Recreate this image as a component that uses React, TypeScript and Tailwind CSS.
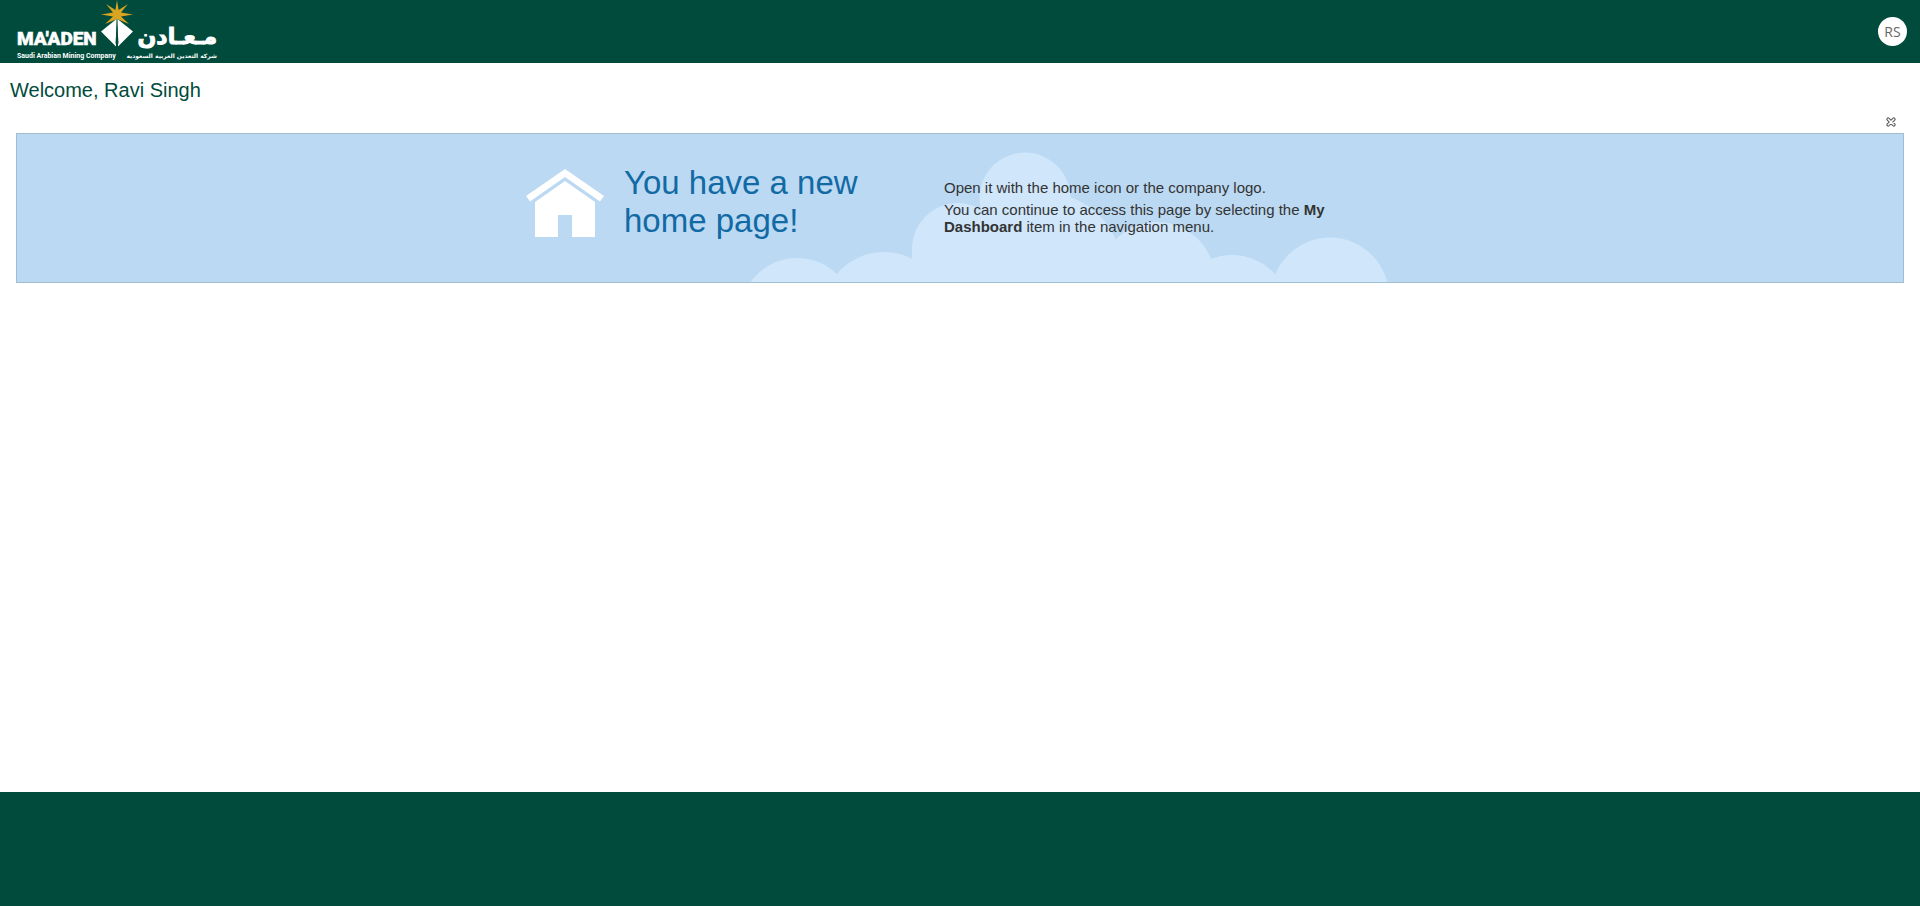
function CompanyLogo() {
  return (
    <svg
      role="img"
      aria-label="Ma'aden, Saudi Arabian Mining Company"
      viewBox="0 0 220 63"
      className="h-[63px] w-[220px]"
      fill="#ffffff"
    >
      <path
        fill="#d9a520"
        d="M117 0L118.600 10 128 4 121 12.500 133 14.500 121 16.500 129 24 117 19 105 24 113 16.500 101 14.500 113 12.500 106 4 115.400 10z"
      />
      <path d="M116.500 19L101 31.500 116 46.500z" />
      <path d="M117.500 19L133 31.500 118 46.500z" />
      <path fill="#004b3c" d="M117 21L118.500 43 117 47 115.500 43z" />
      <text
        x="17"
        y="45"
        fontSize="19"
        stroke="#ffffff"
        strokeWidth="0.500"
        className="font-[Roboto,sans-serif] font-black"
      >
        MA'ADEN
      </text>
      <text x="17" y="58" fontSize="7" className="font-[Roboto,sans-serif] font-bold">
        Saudi Arabian Mining Company
      </text>
      <text
        x="217"
        y="44"
        fontSize="22"
        direction="rtl"
        stroke="#ffffff"
        strokeWidth="1"
        className="font-['DejaVu_Sans',sans-serif] font-bold"
      >
        مـعـادن
      </text>
      <text
        x="217"
        y="58"
        fontSize="6"
        direction="rtl"
        className="font-['DejaVu_Sans',sans-serif] font-bold"
      >
        شركة التعدين العربية السعودية
      </text>
    </svg>
  );
}

function Clouds() {
  return (
    <svg
      aria-hidden="true"
      viewBox="744 134 650 148"
      className="absolute right-0 bottom-0 h-[148px] w-[650px]"
      fill="#cfe6fb"
    >
      <circle cx="797" cy="315" r="57" />
      <circle cx="884" cy="314" r="62" />
      <circle cx="958" cy="249" r="46" />
      <circle cx="1025" cy="198" r="45.5" />
      <circle cx="1045" cy="270" r="77" />
      <circle cx="1157" cy="280" r="58" />
      <circle cx="1232" cy="313" r="58" />
      <circle cx="1330" cy="296.5" r="59" />
      <path d="M912 249h46l72-40 85 30 42 20 54 0v24H912z" />
    </svg>
  );
}

function HouseIcon() {
  return (
    <svg aria-hidden="true" viewBox="0 0 78 70" className="h-[70px] w-[78px] shrink-0" fill="#ffffff">
      <path d="M39 0L78 27l-4 5.500L39 8 4 32.500 0 27z" />
      <path d="M39 12L69 33v35H46V46H32v22H9V33z" />
    </svg>
  );
}

function CloseIcon() {
  return (
    <svg aria-hidden="true" viewBox="0 0 10 10" className="size-[10px]" strokeLinecap="round">
      <path d="M2.200 2.200l5.600 5.600M7.800 2.200l-5.600 5.600" stroke="#555555" strokeWidth="3.600" />
      <path d="M2.200 2.200l5.600 5.600M7.800 2.200l-5.600 5.600" stroke="#ffffff" strokeWidth="1.600" />
    </svg>
  );
}

export default function App() {
  return (
    <div className="flex min-h-screen flex-col bg-white font-['Liberation_Sans',Arial,sans-serif] text-[#333333]">
      <header className="flex items-center justify-between bg-[#004b3c] pr-[13px]">
        <a href="#home">
          <CompanyLogo />
        </a>
        <button
          type="button"
          aria-label="User menu"
          className="flex size-[29px] items-center justify-center rounded-full bg-white font-['Open_Sans',sans-serif] text-sm text-[#666666]"
        >
          RS
        </button>
      </header>

      <main className="flex-1">
        <h1 className="px-[10px] pt-[15px] text-xl leading-6 text-[#004b3c]">Welcome, Ravi Singh</h1>
        <div className="flex justify-end px-6 pt-[15px] pb-[6px]">
          <button type="button" aria-label="Close" className="block">
            <CloseIcon />
          </button>
        </div>
        <section className="mx-4 border border-[#9fbdd3] bg-[#bbd9f2]">
          <div className="relative mx-auto flex h-[148px] max-w-[868px] items-start">
            <Clouds />
            <div className="relative flex w-[418px] shrink-0 gap-5 pt-[30px]">
              <div className="pt-[5px]">
                <HouseIcon />
              </div>
              <h2 className="w-[260px] text-[33px] leading-[38px] text-[#126aa5]">You have a new home page!</h2>
            </div>
            <div className="relative flex w-[400px] flex-col gap-[5px] pt-[45px] text-[15px] leading-[17px]">
              <p>Open it with the home icon or the company logo.</p>
              <p>
                You can continue to access this page by selecting the <strong>My Dashboard</strong> item in the
                navigation menu.
              </p>
            </div>
          </div>
        </section>
      </main>

      <footer className="h-[114px] bg-[#004b3c]" />
    </div>
  );
}
